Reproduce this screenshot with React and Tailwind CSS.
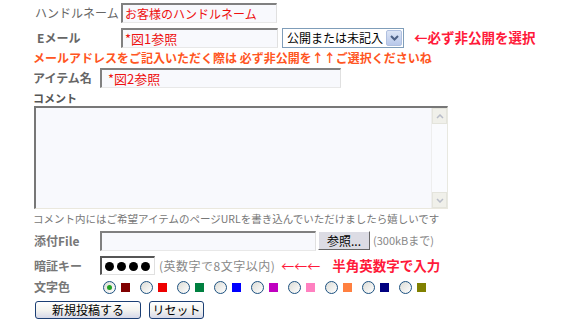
import React from 'react';

const inputBox =
  "h-[20px] bg-[#f8f9fd] border border-t-[#808080] border-l-[#808080] border-r-[#e0e0e0] border-b-[#e8e8e8] border-t-2 border-l-2 flex items-center px-[2px]";

const colors = ['#800000', '#ee0000', '#008040', '#0000ff', '#c000c0', '#ff80c0', '#ff8040', '#000080', '#808000'];

function Radio({ checked }) {
  return (
    <span className="w-[13px] h-[13px] rounded-full border border-[#1c5180] bg-gradient-to-br from-[#dcdcd6] to-white flex items-center justify-center">
      {checked && <span className="w-[5px] h-[5px] rounded-full bg-[#21a121]" />}
    </span>
  );
}

export default function App() {
  return (
    <div
      className="w-[566px] h-[323px] bg-white text-[12px] leading-none overflow-hidden"
      style={{ fontFamily: '"Noto Sans CJK JP", "Liberation Sans", sans-serif' }}
    >
      {/* ハンドルネーム */}
      <div className="flex items-center h-[20px] mt-[3px]">
        <span className="ml-[35px] w-[86px] text-[#666] text-[12px]">ハンドルネーム</span>
        <div className={`${inputBox} w-[156px] text-[12px] text-[#ee1111]`}>お客様のハンドルネーム</div>
      </div>

      {/* Eメール */}
      <div className="flex items-center h-[20px] mt-[5px]">
        <span className="ml-[37px] w-[84px] text-[#666] font-bold text-[12px]">Eメール</span>
        <div className={`${inputBox} w-[157px] text-[13px] text-[#ee1111]`}>*図1参照</div>
        <div className="ml-[4px] w-[122px] h-[20px] border border-[#7f9db9] bg-white flex items-center">
          <span className="flex-1 pl-[4px] text-[12px] text-black">公開または未記入</span>
          <span className="w-[16px] h-[16px] mr-[1px] bg-gradient-to-b from-[#dde5f5] to-[#b8c8ea] border border-[#b0c0e0] rounded-[2px] flex items-center justify-center">
            <svg width="9" height="6" viewBox="0 0 9 6">
              <path d="M1 1 L4.5 4.5 L8 1" stroke="#4d6185" strokeWidth="2" fill="none" />
            </svg>
          </span>
        </div>
        <span className="ml-[10px] text-[13.5px] font-bold text-[#ff1a3a]">←必ず非公開を選択</span>
      </div>

      {/* 注意 */}
      <div className="h-[14px] mt-[3px] ml-[33px] flex items-center text-[12px] font-bold text-[#ff5522] whitespace-nowrap">
        メールアドレスをご記入いただく際は 必ず非公開を↑↑ご選択くださいね
      </div>

      {/* アイテム名 */}
      <div className="flex items-center h-[20px] mt-[3px]">
        <span className="ml-[33px] w-[67px] text-[#666] font-bold text-[12px]">アイテム名</span>
        <div className={`${inputBox} w-[241px] text-[13px] text-[#ee1111] pl-[6px]`}>*図2参照</div>
      </div>

      {/* コメント */}
      <div className="h-[14px] mt-[3px] ml-[33px] flex items-center text-[11px] font-bold text-[#555]">コメント</div>
      <div className="ml-[34px] mt-[1px] w-[414px] h-[103px] flex bg-[#f8f9fd] border-t-2 border-l-2 border-t-[#777] border-l-[#777] border-r border-b border-r-[#e8e8e0] border-b-[#eae8de]">
        <div className="flex-1" />
        <div className="w-[16px] flex flex-col justify-between border-l border-[#eeeeee] bg-[#fafbfe]">
          <span className="h-[16px] bg-[#f0f0ea] border border-[#e4e4dc] flex items-center justify-center">
            <svg width="8" height="5" viewBox="0 0 8 5"><path d="M1 4 L4 1 L7 4" stroke="#b8bcc8" strokeWidth="1.5" fill="none" /></svg>
          </span>
          <span className="h-[16px] bg-[#f0f0ea] border border-[#e4e4dc] flex items-center justify-center">
            <svg width="8" height="5" viewBox="0 0 8 5"><path d="M1 1 L4 4 L7 1" stroke="#b8bcc8" strokeWidth="1.5" fill="none" /></svg>
          </span>
        </div>
      </div>
      <div className="h-[14px] mt-[3px] ml-[33px] flex items-center text-[10.5px] text-[#777] whitespace-nowrap">
        コメント内にはご希望アイテムのページURLを書き込んでいただけましたら嬉しいです
      </div>

      {/* 添付File */}
      <div className="flex items-center h-[19px] mt-[5px]">
        <span className="ml-[34px] w-[66px] text-[#777] font-bold text-[12px]">添付File</span>
        <div className={`${inputBox} h-[19px] w-[216px]`} />
        <div className="ml-[2px] w-[52px] h-[19px] bg-[#dcdce4] border border-t-white border-l-white border-r-[#666] border-b-[#666] flex items-center justify-center text-[12px] text-black">
          参照...
        </div>
        <span className="ml-[3px] text-[11px] text-[#888]">(300kBまで)</span>
      </div>

      {/* 暗証キー */}
      <div className="flex items-center h-[19px] mt-[6px]">
        <span className="ml-[34px] w-[66px] text-[#777] font-bold text-[12px]">暗証キー</span>
        <div className="w-[55px] h-[19px] bg-white border-t-2 border-l-2 border-t-[#555] border-l-[#555] border-r border-b border-r-[#e0e0e0] border-b-[#e0e0e0] flex items-center gap-[3px] pl-[3px]">
          {[0, 1, 2, 3].map(i => (
            <span key={i} className="w-[9px] h-[9px] rounded-full bg-black" />
          ))}
        </div>
        <span className="ml-[4px] text-[12px] text-[#888] tracking-[0.5px]">(英数字で8文字以内)</span>
        <span className="ml-[6px] text-[13px] text-[#ff1a3a]">←←←</span>
        <span className="ml-[12px] text-[13.5px] font-bold text-[#ff1a3a]">半角英数字で入力</span>
      </div>

      {/* 文字色 */}
      <div className="flex items-center h-[16px] mt-[4px]">
        <span className="ml-[34px] w-[69px] text-[#777] font-bold text-[12px]">文字色</span>
        <div className="flex items-center gap-[10px]">
          {colors.map((c, i) => (
            <div key={c} className="flex items-center gap-[5px]">
              <Radio checked={i === 0} />
              <span className="w-[9px] h-[9px]" style={{ backgroundColor: c }} />
            </div>
          ))}
        </div>
      </div>

      {/* ボタン */}
      <div className="flex items-center mt-[6px] ml-[35px] gap-[8px]">
        <div className="w-[106px] h-[18px] rounded-[3px] border border-[#1c3f74] bg-gradient-to-b from-white via-[#f4f4f0] to-[#d6d8e8] flex items-center justify-center text-[12px] text-black">
          新規投稿する
        </div>
        <div className="w-[55px] h-[18px] rounded-[3px] border border-[#1c3f74] bg-gradient-to-b from-white via-[#f4f4f0] to-[#d6d8e8] flex items-center justify-center text-[12px] text-black">
          リセット
        </div>
      </div>
    </div>
  );
}
